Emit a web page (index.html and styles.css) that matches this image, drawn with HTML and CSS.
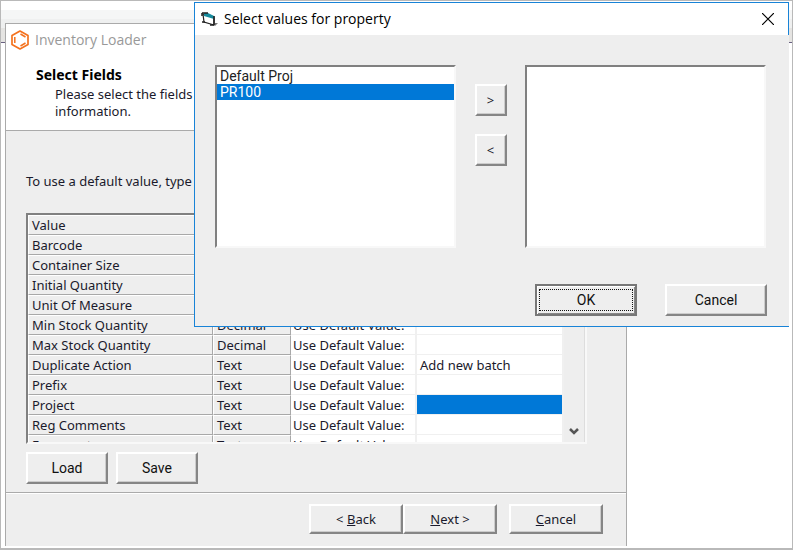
FILE: index.html
```html
<!DOCTYPE html>
<html lang="en">
<head>
<meta charset="utf-8">
<title>Inventory Loader</title>
<link rel="stylesheet" href="styles.css">
</head>
<body>
<div class="desktop">
  <div class="backdrop" aria-hidden="true"><i class="strip strip-a"></i><i class="strip strip-b"></i><i class="strip strip-c"></i></div>

  <main class="window">
    <header class="window-title">
      <svg class="logo" viewBox="0 0 20 20" aria-hidden="true"><g fill="none" stroke="#f4721e" stroke-linejoin="round"><path stroke-width="1.7" d="M10 1 18 5.500V14.500L10 19 2 14.500V5.500Z"/><path stroke-width="1.500" d="M4.800 7V13M10.500 4 15.500 7M10.500 16 15.500 13"/></g></svg>
      <span>Inventory Loader</span>
    </header>
    <section class="intro">
      <h1>Select Fields</h1>
      <p>Please select the fields<br>information.</p>
    </section>
    <section class="content">
      <p class="hint">To use a default value, type</p>
      <div class="grid-box">
        <table>
          <colgroup><col class="c-name"><col class="c-type"><col class="c-use"><col class="c-value"></colgroup>
          <tbody>
            <tr><th>Value</th><th>Type</th><th></th><th></th></tr>
            <tr><th>Barcode</th><th>Text</th><td>Use Default Value:</td><td></td></tr>
            <tr><th>Container Size</th><th>Decimal</th><td>Use Default Value:</td><td></td></tr>
            <tr><th>Initial Quantity</th><th>Decimal</th><td>Use Default Value:</td><td></td></tr>
            <tr><th>Unit Of Measure</th><th>Text</th><td>Use Default Value:</td><td></td></tr>
            <tr><th>Min Stock Quantity</th><th>Decimal</th><td>Use Default Value:</td><td></td></tr>
            <tr><th>Max Stock Quantity</th><th>Decimal</th><td>Use Default Value:</td><td></td></tr>
            <tr><th>Duplicate Action</th><th>Text</th><td>Use Default Value:</td><td>Add new batch</td></tr>
            <tr><th>Prefix</th><th>Text</th><td>Use Default Value:</td><td></td></tr>
            <tr><th>Project</th><th>Text</th><td>Use Default Value:</td><td class="selected"></td></tr>
            <tr><th>Reg Comments</th><th>Text</th><td>Use Default Value:</td><td></td></tr>
            <tr><th>Fragments</th><th>Text</th><td>Use Default Value:</td><td></td></tr>
          </tbody>
        </table>
        <div class="scrollbar"><svg class="chevron" viewBox="0 0 10 8" aria-hidden="true"><path d="M1 1 5 5 9 1" fill="none" stroke="#555" stroke-width="2.500"/></svg></div>
      </div>
      <div class="actions">
        <button type="button" class="btn raster">Load</button>
        <button type="button" class="btn raster">Save</button>
      </div>
    </section>
    <footer class="wizard">
      <button type="button" class="btn">&lt; <u>B</u>ack</button>
      <button type="button" class="btn"><u>N</u>ext &gt;</button>
      <button type="button" class="btn cancel"><u>C</u>ancel</button>
    </footer>
  </main>

  <section class="dialog" role="dialog" aria-labelledby="dialog-title">
    <header class="dialog-title">
      <svg class="form-icon" viewBox="0 0 17 16" aria-hidden="true"><path d="M2 3 13 6V14L3 11Z" fill="#fff" stroke="#222" stroke-width="1.200"/><path d="M3 2H7L13 5V8L3 5Z" fill="#168a9c"/><path d="M1 2H7M1 2V5M1 11H4M13 5V14M9 14H13" fill="none" stroke="#222" stroke-width="1.500"/><path d="M14 12 17 12 14 15Z" fill="#777"/></svg>
      <h2 id="dialog-title">Select values for property</h2>
      <button type="button" class="close" aria-label="Close"><svg viewBox="0 0 12 12" aria-hidden="true"><path d="M0 0 12 12M12 0 0 12" stroke="#000" stroke-width="1.200"/></svg></button>
    </header>
    <div class="picker">
      <select class="list" size="11" aria-label="Available values"><option>Default Proj</option><option class="picked">PR100</option></select>
      <div class="movers">
        <button type="button" class="btn">&gt;</button>
        <button type="button" class="btn">&lt;</button>
      </div>
      <select class="list" size="11" aria-label="Selected values"></select>
    </div>
    <footer class="dialog-actions">
      <button type="button" class="btn raster default"><span>OK</span></button>
      <button type="button" class="btn raster">Cancel</button>
    </footer>
  </section>
</div>
</body>
</html>
```
FILE: styles.css
```css
* { box-sizing: border-box; }
body { margin: 0; background: #fff; color: #1a1a2c; font: 13px/16px "Noto Sans", "DejaVu Sans", sans-serif; }
h1, h2, p { margin: 0; }
.desktop { position: relative; min-height: 100vh; padding: 22px 5px 2px; border: 1px solid #b9b9b9; border-bottom-width: 2px; overflow: hidden; }
.backdrop { position: absolute; inset: 0 0 auto; padding-top: 9px; border-bottom: 1px solid #686080; }
.strip { display: block; height: 9px; background: #f5f6f6; }
.strip-b { background: #eff0f0; }
.strip-c { height: 14px; background: #e5e4e2; }

.window { position: relative; width: calc(100% - 159px); border: 1px solid #aaa; border-bottom: 0; background: #eee; }
.desktop > .window { margin-left: -1px; }
.window-title { display: flex; align-items: center; gap: 5px; height: 32px; padding-left: 4px; background: #fff; color: #999; font: 14px/20px "Open Sans", sans-serif; }
.logo { width: 20px; height: 20px; }
.intro { padding: 10px 30px 10px; border-bottom: 1px solid #aaa; background: #fff; }
.intro h1 { color: #000; font: bold 14px/18px "Noto Sans", sans-serif; }
.intro p { padding: 2px 0 0 19px; line-height: 17px; }
.content { padding: 42px 39px 8px 20px; border-bottom: 1px solid #aaa; box-shadow: 0 1px #fff; }
.grid-box { display: flex; height: 231px; margin-top: 24px; border: 2px solid; border-color: #808080 #f8f8f8 #f8f8f8 #808080; overflow: hidden; background: #fff; }
table { flex: 1; align-self: flex-start; border-collapse: separate; border-spacing: 0; table-layout: fixed; }
.c-name { width: 185px; }
.c-type { width: 78px; }
.c-use { width: 126px; }
th, td { height: 20px; padding: 0 2px; border: solid #f0f0f0; border-width: 0 2px 1px 0; text-align: left; font-weight: normal; white-space: nowrap; line-height: 18px; }
td + td { padding-left: 3px; }
th { padding: 0 3px; border: 1px solid #a8a8a8; border-top-color: #fff; border-left-color: #fff; background: #eee; }
.selected { background: #0078d7; }
.scrollbar { display: flex; align-items: flex-end; justify-content: center; width: 21px; padding-bottom: 6px; border-right: 1px solid #ddd; background: #eee; }
.chevron { width: 10px; height: 8px; }

.btn { min-width: 82px; height: 32px; padding: 0; border: 2px solid; border-color: #fff #858585 #858585 #fff; box-shadow: inset -1px -1px #ccc; background: #eee; color: #1a1a2c; font: inherit; }
.raster { color: #111; font: 14px/16px Roboto, "Liberation Sans", sans-serif; }
.actions { display: flex; gap: 8px; padding-top: 8px; }
.wizard { display: flex; justify-content: flex-end; padding: 11px 23px 12px; }
.wizard .btn { width: 94px; height: 30px; }
.wizard .cancel { margin-left: 12px; }

.dialog { position: absolute; top: 1px; left: 193px; right: 3px; border: 1px solid #1883d7; border-right: 0; background: #eee; }
.dialog-title { display: flex; align-items: center; gap: 6px; height: 32px; padding: 0 14px 0 6px; border-right: 1px solid #1883d7; background: #fff; }
.dialog-title h2 { flex: 1; color: #000; font: 14px/20px "Open Sans", sans-serif; }
.form-icon { width: 17px; height: 16px; }
.close { width: 12px; height: 12px; padding: 0; border: 0; background: none; }
.close svg { display: block; }
.picker { display: flex; justify-content: space-between; padding: 30px 23px 0 20px; }
.list { width: 241px; height: 183px; padding: 1px 0; border: 2px solid; border-color: #808080 #f8f8f8 #f8f8f8 #808080; border-radius: 0; background: #fff; color: #222; font: 14px/16px Roboto, "Liberation Sans", sans-serif; overflow: hidden; outline: 0; }
.list option { min-height: 16px; height: 16px; padding: 0 3px; }
.list .picked { background: #0078d7; color: #fff; }
.movers { display: flex; flex-direction: column; gap: 18px; padding-top: 19px; }
.movers .btn { min-width: 32px; width: 32px; }
.dialog-actions { display: flex; justify-content: flex-end; gap: 28px; padding: 36px 22px 10px; }
.dialog-actions .btn { width: 102px; }
.default { padding: 1px; border-color: #777; box-shadow: inset 1px 1px #fff, inset -1px -1px #888; }
.default span { display: block; margin: 1px; border: 1px dotted #111; line-height: 20px; }
```
